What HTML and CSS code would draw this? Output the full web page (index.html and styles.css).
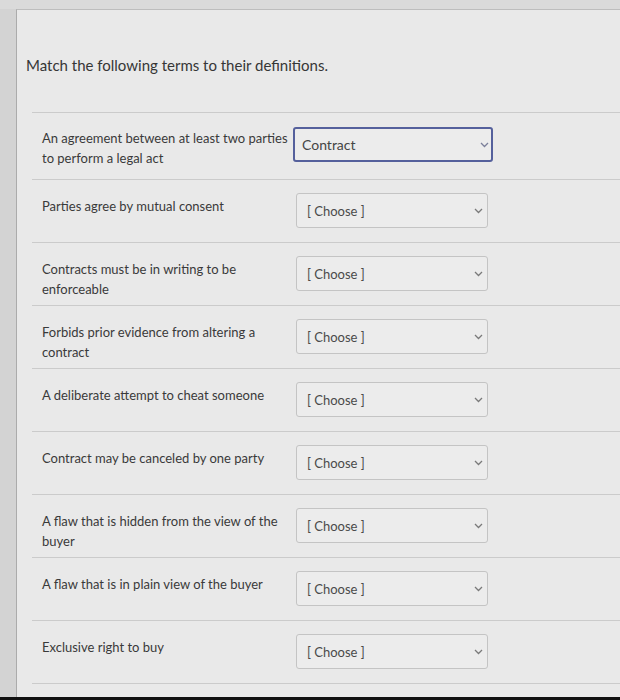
FILE: index.html
```html
<!DOCTYPE html>
<html lang="en">
<head>
    <meta charset="UTF-8">
    <meta name="viewport" content="width=device-width, initial-scale=1.0">
    <title>Matching question</title>
    <link rel="stylesheet" href="styles.css">
</head>
<body>
    <div class="screen">
        <div class="top-bar"></div>
        <div class="page">
            <p class="question-text">Match the following terms to their definitions.</p>

            <div class="answers">
                <div class="match-row match-row-first">
                    <div class="match-label">An agreement between at least two parties to perform a legal act</div>
                    <div class="select select-focused">
                        <span>Contract</span>
                        <svg class="chevron" width="9" height="6" viewBox="0 0 9 6"><path d="M1 1l3.5 3.5L8 1" fill="none" stroke="#7b7f9a" stroke-width="1.3"/></svg>
                    </div>
                </div>
                <div class="match-row">
                    <div class="match-label">Parties agree by mutual consent</div>
                    <div class="select">
                        <span>[ Choose ]</span>
                        <svg class="chevron" width="9" height="6" viewBox="0 0 9 6"><path d="M1 1l3.5 3.5L8 1" fill="none" stroke="#7a7a7a" stroke-width="1.3"/></svg>
                    </div>
                </div>
                <div class="match-row">
                    <div class="match-label">Contracts must be in writing to be enforceable</div>
                    <div class="select">
                        <span>[ Choose ]</span>
                        <svg class="chevron" width="9" height="6" viewBox="0 0 9 6"><path d="M1 1l3.5 3.5L8 1" fill="none" stroke="#7a7a7a" stroke-width="1.3"/></svg>
                    </div>
                </div>
                <div class="match-row">
                    <div class="match-label">Forbids prior evidence from altering a contract</div>
                    <div class="select">
                        <span>[ Choose ]</span>
                        <svg class="chevron" width="9" height="6" viewBox="0 0 9 6"><path d="M1 1l3.5 3.5L8 1" fill="none" stroke="#7a7a7a" stroke-width="1.3"/></svg>
                    </div>
                </div>
                <div class="match-row">
                    <div class="match-label">A deliberate attempt to cheat someone</div>
                    <div class="select">
                        <span>[ Choose ]</span>
                        <svg class="chevron" width="9" height="6" viewBox="0 0 9 6"><path d="M1 1l3.5 3.5L8 1" fill="none" stroke="#7a7a7a" stroke-width="1.3"/></svg>
                    </div>
                </div>
                <div class="match-row">
                    <div class="match-label">Contract may be canceled by one party</div>
                    <div class="select">
                        <span>[ Choose ]</span>
                        <svg class="chevron" width="9" height="6" viewBox="0 0 9 6"><path d="M1 1l3.5 3.5L8 1" fill="none" stroke="#7a7a7a" stroke-width="1.3"/></svg>
                    </div>
                </div>
                <div class="match-row">
                    <div class="match-label">A flaw that is hidden from the view of the buyer</div>
                    <div class="select">
                        <span>[ Choose ]</span>
                        <svg class="chevron" width="9" height="6" viewBox="0 0 9 6"><path d="M1 1l3.5 3.5L8 1" fill="none" stroke="#7a7a7a" stroke-width="1.3"/></svg>
                    </div>
                </div>
                <div class="match-row">
                    <div class="match-label">A flaw that is in plain view of the buyer</div>
                    <div class="select">
                        <span>[ Choose ]</span>
                        <svg class="chevron" width="9" height="6" viewBox="0 0 9 6"><path d="M1 1l3.5 3.5L8 1" fill="none" stroke="#7a7a7a" stroke-width="1.3"/></svg>
                    </div>
                </div>
                <div class="match-row">
                    <div class="match-label">Exclusive right to buy</div>
                    <div class="select">
                        <span>[ Choose ]</span>
                        <svg class="chevron" width="9" height="6" viewBox="0 0 9 6"><path d="M1 1l3.5 3.5L8 1" fill="none" stroke="#7a7a7a" stroke-width="1.3"/></svg>
                    </div>
                </div>
                <div class="match-row">
                    <div class="match-label">A contract that meets all the requirements</div>
                    <div class="select">
                        <span>[ Choose ]</span>
                        <svg class="chevron" width="9" height="6" viewBox="0 0 9 6"><path d="M1 1l3.5 3.5L8 1" fill="none" stroke="#7a7a7a" stroke-width="1.3"/></svg>
                    </div>
                </div>
            </div>
        </div>
    </div>
</body>
</html>
```

FILE: styles.css
```css
/* Reset */
* {
    margin: 0;
    padding: 0;
    box-sizing: border-box;
}

:root {
    --gutter: #d3d3d3;
    --page-bg: #e9e9e9;
    --edge: #ababab;
    --rule: #cbcbcb;
    --text: #3a3a3a;
    --select-bg: #ececec;
    --select-border: #c4c4c4;
    --focus: #55609c;
}

body {
    font-family: Lato, "Open Sans", Arial, sans-serif;
    color: var(--text);
    background-color: #111;
    height: 700px;
    overflow: hidden;
}

.screen {
    height: 697px;
    overflow: hidden;
    background-color: var(--gutter);
    display: flex;
    flex-direction: column;
}

.top-bar {
    height: 9px;
    flex-shrink: 0;
    background-color: #dadada;
}

/* Page */
.page {
    flex: 1;
    margin-left: 16px;
    background-color: var(--page-bg);
    border-left: 1px solid var(--edge);
    border-top: 1px solid #bdbdbd;
    padding: 45px 0 0 9px;
}

.question-text {
    font-size: 15px;
    line-height: 20px;
    color: #363636;
}

.answers {
    margin-top: 37px;
    margin-left: 6px;
}

/* Rows */
.match-row {
    display: flex;
    align-items: flex-start;
    height: 63px;
    padding: 13px 0 0 10px;
    border-top: 1px solid var(--rule);
}

.match-row-first {
    height: 67px;
    padding-top: 14px;
}

.match-label {
    width: 247px;
    flex-shrink: 0;
    font-size: 13px;
    line-height: 20px;
    padding-top: 3px;
}

.match-row-first .match-label {
    padding-top: 1px;
}

/* Select boxes */
.select {
    width: 192px;
    height: 35px;
    margin-left: 7px;
    display: flex;
    align-items: center;
    justify-content: space-between;
    padding: 0 4px 0 10px;
    background-color: var(--select-bg);
    border: 1px solid var(--select-border);
    border-radius: 3px;
    font-size: 13px;
    color: #4a4a4a;
}

.select-focused {
    width: 200px;
    height: 35px;
    margin-left: 4px;
    padding: 0 2px 0 7px;
    border: 2px solid var(--focus);
    font-size: 14px;
    color: #454545;
}

.chevron {
    flex-shrink: 0;
}
```
